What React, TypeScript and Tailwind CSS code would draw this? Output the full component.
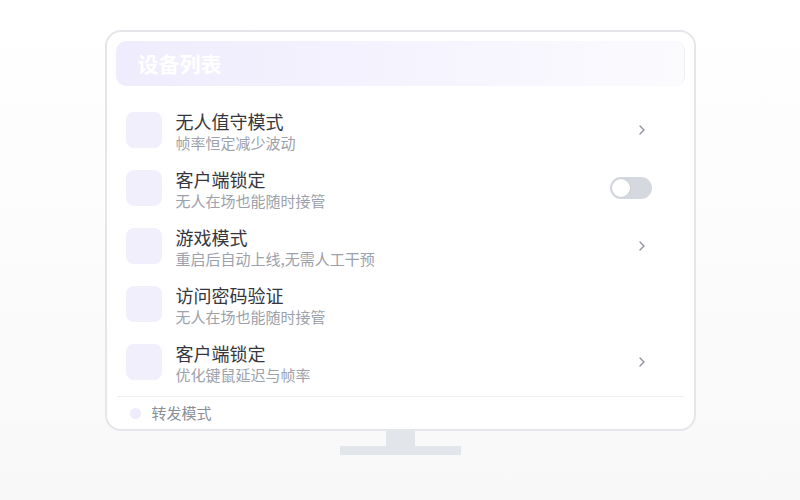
import React from 'react';

type Row = {
  title: string;
  sub: string;
  action: 'chevron' | 'toggle' | 'none';
};

const rows: Row[] = [
  { title: '无人值守模式', sub: '帧率恒定减少波动', action: 'chevron' },
  { title: '客户端锁定', sub: '无人在场也能随时接管', action: 'toggle' },
  { title: '游戏模式', sub: '重启后自动上线,无需人工干预', action: 'chevron' },
  { title: '访问密码验证', sub: '无人在场也能随时接管', action: 'none' },
  { title: '客户端锁定', sub: '优化键鼠延迟与帧率', action: 'chevron' },
];

const Chevron = () => (
  <svg width="6" height="10" viewBox="0 0 6 10" fill="none" className="mr-[7px]">
    <path d="M1 1l4 4-4 4" stroke="#8b909a" strokeWidth={1.3} strokeLinecap="round" strokeLinejoin="round" />
  </svg>
);

const Toggle = () => (
  <div className="w-[42px] h-[22px] rounded-full bg-[#d5d8de] flex items-center px-[2px]">
    <div className="w-[18px] h-[18px] rounded-full bg-white shadow-[0_0_0_1px_rgba(0,0,0,0.04)]" />
  </div>
);

const App: React.FC = () => {
  return (
    <div
      className="w-[800px] h-[500px] bg-gradient-to-b from-white to-[#f8f8f9] flex flex-col items-center pt-[30px]"
      style={{ fontFamily: '"Noto Sans CJK SC", "Noto Sans", sans-serif' }}
    >
      {/* Monitor */}
      <div className="w-[591px] h-[401px] rounded-[16px] border-2 border-[#e4e6ea] bg-white flex flex-col px-[9px] pt-[9px]">
        {/* Header */}
        <div className="h-[45px] rounded-[10px] bg-gradient-to-r from-[#efecfd] via-[#f5f3fe] to-[#fbfbfe] border-r border-[#eceef2] flex items-center pl-[22px]">
          <h2 className="text-[21px] font-bold text-white leading-none">设备列表</h2>
        </div>

        {/* List */}
        <div className="flex flex-col mt-[15px]">
          {rows.map((r, i) => (
            <div key={i} className="h-[58px] flex items-center pl-[10px] pr-[33px]">
              <div className="w-[36px] h-[36px] rounded-[8px] bg-[#f2effd] shrink-0" />
              <div className="flex flex-col ml-[14px] flex-1 pt-[1px]">
                <span className="text-[18px] leading-[24px] text-[#35373c]">{r.title}</span>
                <span className="text-[15px] leading-[20px] text-[#9ca1ab]">{r.sub}</span>
              </div>
              {r.action === 'chevron' && <Chevron />}
              {r.action === 'toggle' && <Toggle />}
            </div>
          ))}
        </div>

        {/* Footer */}
        <div className="mt-[5px] border-t border-[#eef0f3] mx-[1px] h-[33px] flex items-center pl-[13px]">
          <div className="w-[11px] h-[11px] rounded-full bg-[#eeebfc]" />
          <span className="ml-[11px] text-[15px] text-[#8a8f99]">转发模式</span>
        </div>
      </div>

      {/* Stand */}
      <div className="w-[29px] h-[15px] bg-[#e2e5e9]" />
      <div className="w-[121px] h-[9px] bg-[#e2e5e9]" />
    </div>
  );
};

export default App;
